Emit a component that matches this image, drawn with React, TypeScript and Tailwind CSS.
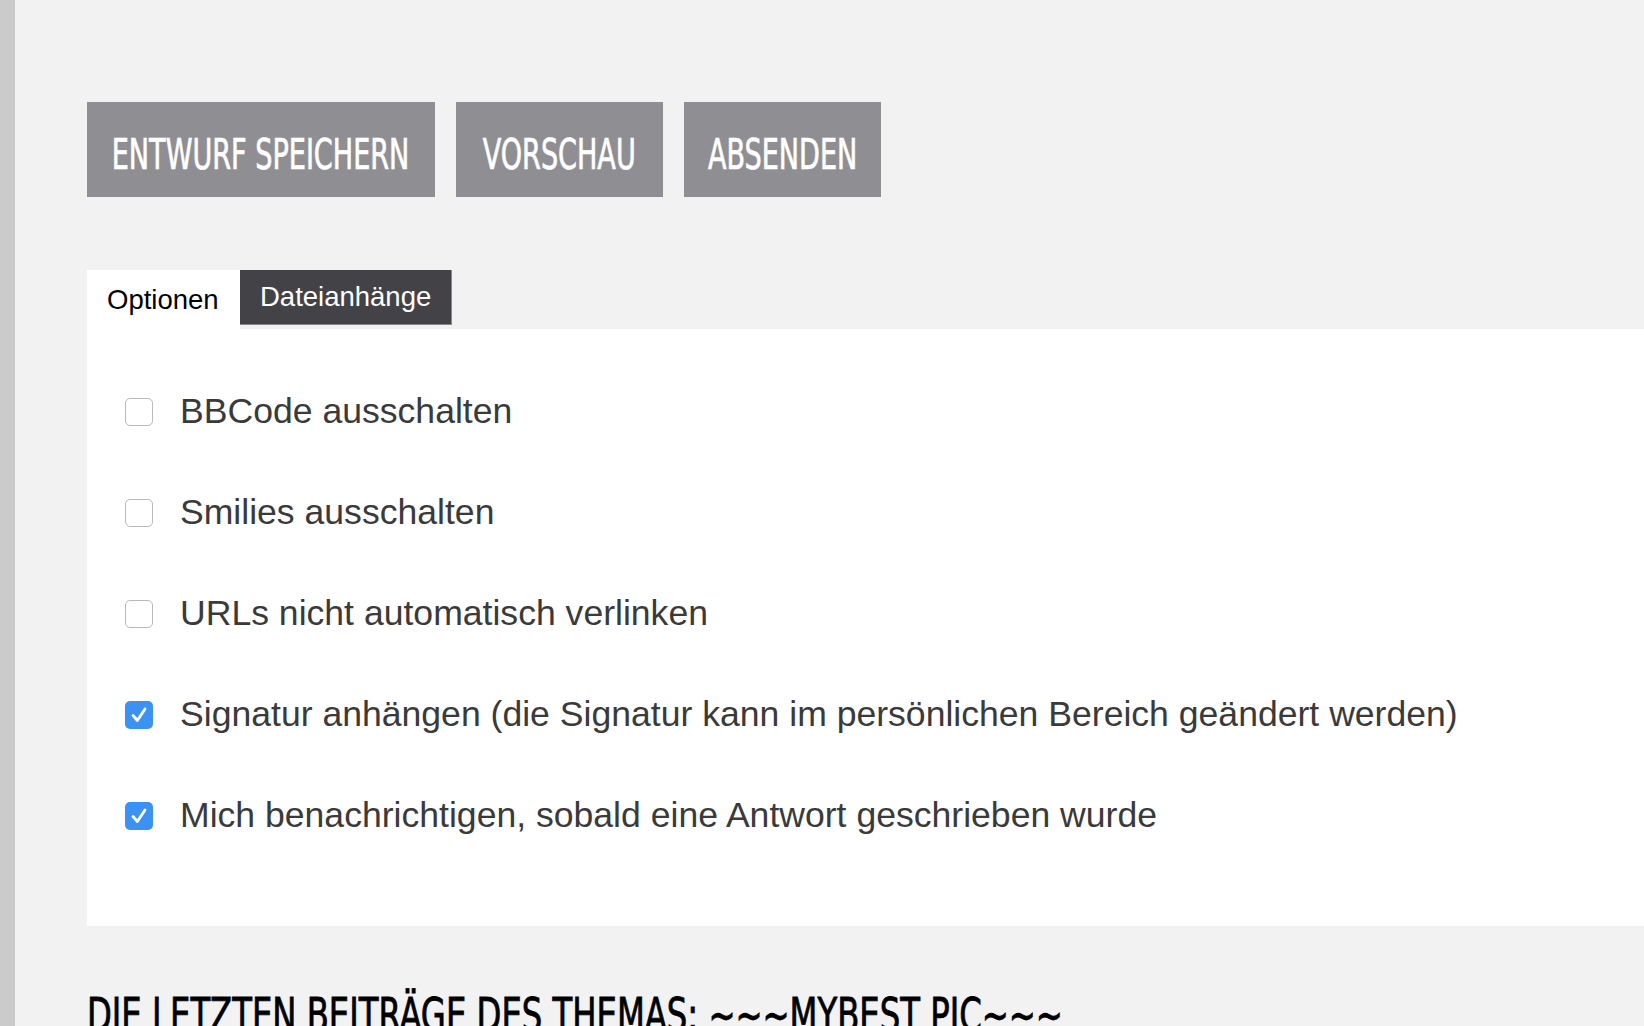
const options = [
    { label: "BBCode ausschalten", checked: false },
    { label: "Smilies ausschalten", checked: false },
    { label: "URLs nicht automatisch verlinken", checked: false },
    { label: "Signatur anhängen (die Signatur kann im persönlichen Bereich geändert werden)", checked: true },
    { label: "Mich benachrichtigen, sobald eine Antwort geschrieben wurde", checked: true },
];

const buttons = [
    { label: "Entwurf speichern", width: "w-[348px]" },
    { label: "Vorschau", width: "w-[207px]" },
    { label: "Absenden", width: "w-[197px]" },
];

function Checkbox({ checked }: { checked: boolean }) {
    if (checked) {
        return (
            <span className="flex h-[28px] w-[28px] shrink-0 items-center justify-center rounded-[5px] bg-[#3b92f4]">
                <svg width="24" height="24" viewBox="0 0 22 22" fill="none">
                    <path d="M5.5 11.5 L9.5 16 L16.5 5.5" stroke="white" strokeWidth="2.6" strokeLinecap="round" strokeLinejoin="round" />
                </svg>
            </span>
        );
    }
    return <span className="block h-[28px] w-[28px] shrink-0 rounded-[5px] border border-[#b9b9b9] bg-white" />;
}

export default function App() {
    return (
        <div className="flex min-h-screen w-full overflow-hidden bg-[#f2f2f2]">
            <div className="w-[15px] shrink-0 bg-[#cbcbcb]" />
            <div className="flex-1 pl-[72px] pt-[102px]">
                <div className="flex gap-[21px]">
                    {buttons.map((b) => (
                        <button
                            key={b.label}
                            className={`${b.width} flex h-[95px] items-center justify-center overflow-hidden bg-[#8f8f93] pt-[10px] text-white`}
                        >
                            <span className="inline-block scale-x-[0.7] whitespace-nowrap font-['Liberation_Sans_Narrow','DejaVu_Sans_Condensed',sans-serif] text-[43px] uppercase leading-none [-webkit-text-stroke:0.7px_white]">
                                {b.label}
                            </span>
                        </button>
                    ))}
                </div>

                <div className="mt-[73px] flex items-start font-['Liberation_Sans',Arial,sans-serif] text-[27.5px]">
                    <div className="flex h-[59px] w-[153px] items-center bg-white pl-[20px] text-black">Optionen</div>
                    <div className="flex h-[55px] items-center border-b border-r border-[#8a8a8a] bg-[#434347] px-[20px] text-white">
                        Dateianhänge
                    </div>
                </div>

                <div className="flex flex-col bg-white pb-[60px] pl-[38px] pt-[32px] font-['Liberation_Sans',Arial,sans-serif]">
                    {options.map((o) => (
                        <label key={o.label} className="flex h-[101px] items-center gap-[27px]">
                            <Checkbox checked={o.checked} />
                            <span className="whitespace-nowrap text-[35.6px] text-[#3a3a3a]">{o.label}</span>
                        </label>
                    ))}
                </div>

                <h2 className="mt-[66px] origin-left scale-x-[0.78] whitespace-nowrap font-['Liberation_Sans_Narrow','DejaVu_Sans_Condensed',sans-serif] text-[46px] font-normal uppercase leading-none text-black [-webkit-text-stroke:0.8px_black]">
                    Die letzten Beiträge des Themas: ~~~MyBest Pic~~~
                </h2>
            </div>
        </div>
    );
}
